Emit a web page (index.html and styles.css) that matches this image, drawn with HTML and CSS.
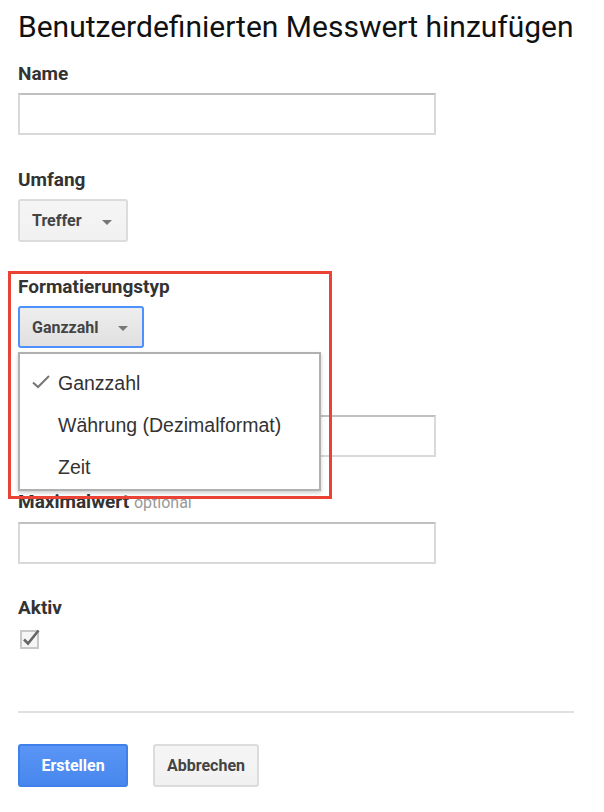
FILE: index.html
```html
<!DOCTYPE html>
<html lang="de">
<head>
    <meta charset="UTF-8">
    <title>Benutzerdefinierten Messwert hinzufügen</title>
    <link rel="stylesheet" href="styles.css">
</head>
<body>

<div class="page">
    <h1 class="title">Benutzerdefinierten Messwert hinzufügen</h1>

    <div class="field">
        <label class="label">Name</label>
        <input type="text" class="text-input">
    </div>

    <div class="field">
        <label class="label">Umfang</label>
        <div class="select-wrap">
            <button class="select-btn">Treffer <span class="arrow"></span></button>
        </div>
    </div>

    <!-- Formatierungstyp, Menü ist geöffnet -->
    <div class="field highlighted">
        <div class="highlight-box"></div>
        <label class="label">Formatierungstyp</label>
        <div class="select-wrap">
            <button class="select-btn focused">Ganzzahl <span class="arrow"></span></button>
            <ul class="menu">
                <li class="menu-item selected">
                    <svg class="check" width="18" height="14" viewBox="0 0 18 14">
                        <path d="M1 7.5 L6 12 L17 1" fill="none" stroke="#777" stroke-width="2"/>
                    </svg>
                    Ganzzahl
                </li>
                <li class="menu-item">Währung (Dezimalformat)</li>
                <li class="menu-item">Zeit</li>
            </ul>
        </div>
    </div>

    <div class="field">
        <label class="label">Minimalwert <span class="optional">optional</span></label>
        <input type="text" class="text-input">
    </div>

    <div class="field field-max">
        <label class="label">Maximalwert <span class="optional">optional</span></label>
        <input type="text" class="text-input">
    </div>

    <div class="field field-check">
        <label class="label">Aktiv</label>
        <svg class="checkbox" width="22" height="22" viewBox="0 0 22 22">
            <rect x="3" y="4" width="17" height="17" fill="#f5f5f5" stroke="#c8c8c8" stroke-width="2"/>
            <path d="M6 12.5 L10 16.5 L20.5 3.5" fill="none" stroke="#666" stroke-width="2.6"/>
        </svg>
    </div>

    <hr class="divider">

    <div class="actions">
        <button class="btn btn-primary">Erstellen</button>
        <button class="btn">Abbrechen</button>
    </div>
</div>

</body>
</html>
```

FILE: styles.css
```css
body {
    margin: 0;
    font-family: Roboto, "Liberation Sans", Arial, sans-serif;
    color: #333;
    background: white;
}
.page {
    padding: 9px 18px 0 18px;
}
.title {
    margin: 0 0 18px 0;
    font-size: 30px;
    font-weight: 400;
    line-height: 36px;
    color: #111;
}
.field {
    margin-bottom: 34px;
}
.field-max {
    margin-bottom: 33px;
}
.field-check {
    margin-bottom: 0;
}
.label {
    display: block;
    margin-bottom: 8px;
    font-size: 19px;
    font-weight: 700;
    line-height: 22px;
    color: #333;
}
.optional {
    font-size: 16px;
    font-weight: 400;
    color: #999;
}
.text-input {
    display: block;
    box-sizing: border-box;
    width: 418px;
    height: 42px;
    margin: 0;
    border: 2px solid #d9d9d9;
    border-top-color: #c0c0c0;
    background: white;
}

.select-wrap {
    position: relative;
    display: inline-block;
}
.select-btn {
    display: flex;
    align-items: center;
    gap: 20px;
    height: 43px;
    padding: 0 14px 0 12px;
    border: 2px solid #dcdcdc;
    border-radius: 3px;
    background: linear-gradient(#f5f5f5, #f1f1f1);
    font-family: Roboto, sans-serif;
    font-size: 16px;
    font-weight: 700;
    color: #444;
}
.select-btn.focused {
    height: 42px;
    border-color: #4d90fe;
    background: linear-gradient(#eeeeee, #e0e0e0);
}
.arrow {
    width: 0;
    height: 0;
    margin-top: 3px;
    border-left: 5px solid transparent;
    border-right: 5px solid transparent;
    border-top: 5px solid #777;
}

.highlighted {
    position: relative;
    margin-bottom: 36px;
}
.highlight-box {
    position: absolute;
    top: -5px;
    left: -10px;
    width: 318px;
    height: 222px;
    border: 3px solid #ea4335;
    z-index: 2;
    pointer-events: none;
}
.menu {
    position: absolute;
    top: calc(100% + 4px);
    left: 0;
    z-index: 1;
    box-sizing: border-box;
    width: 303px;
    margin: 0;
    padding: 8px 0 1px 0;
    list-style: none;
    background: white;
    border: 2px solid #b0b0b0;
    box-shadow: 0 2px 4px rgba(0, 0, 0, 0.2);
}
.menu-item {
    position: relative;
    height: 42px;
    line-height: 42px;
    padding-left: 38px;
    font-family: "Liberation Sans", Arial, sans-serif;
    font-size: 19.5px;
    color: #333;
}
.check {
    position: absolute;
    left: 12px;
    top: 13px;
}

.checkbox {
    display: block;
}

.divider {
    margin: 62px 0 31px 0;
    width: 556px;
    height: 2px;
    border: none;
    background: #e0e0e0;
}
.actions {
    display: flex;
    gap: 25px;
}
.btn {
    box-sizing: border-box;
    height: 43px;
    padding: 0 12px;
    border: 2px solid #dcdcdc;
    border-radius: 3px;
    background: linear-gradient(#f5f5f5, #f1f1f1);
    font-family: Roboto, sans-serif;
    font-size: 16px;
    font-weight: 700;
    color: #444;
}
.btn-primary {
    min-width: 110px;
    border-color: #3f80ea;
    background: linear-gradient(#5a95f5, #4787ed);
    color: white;
}
```
